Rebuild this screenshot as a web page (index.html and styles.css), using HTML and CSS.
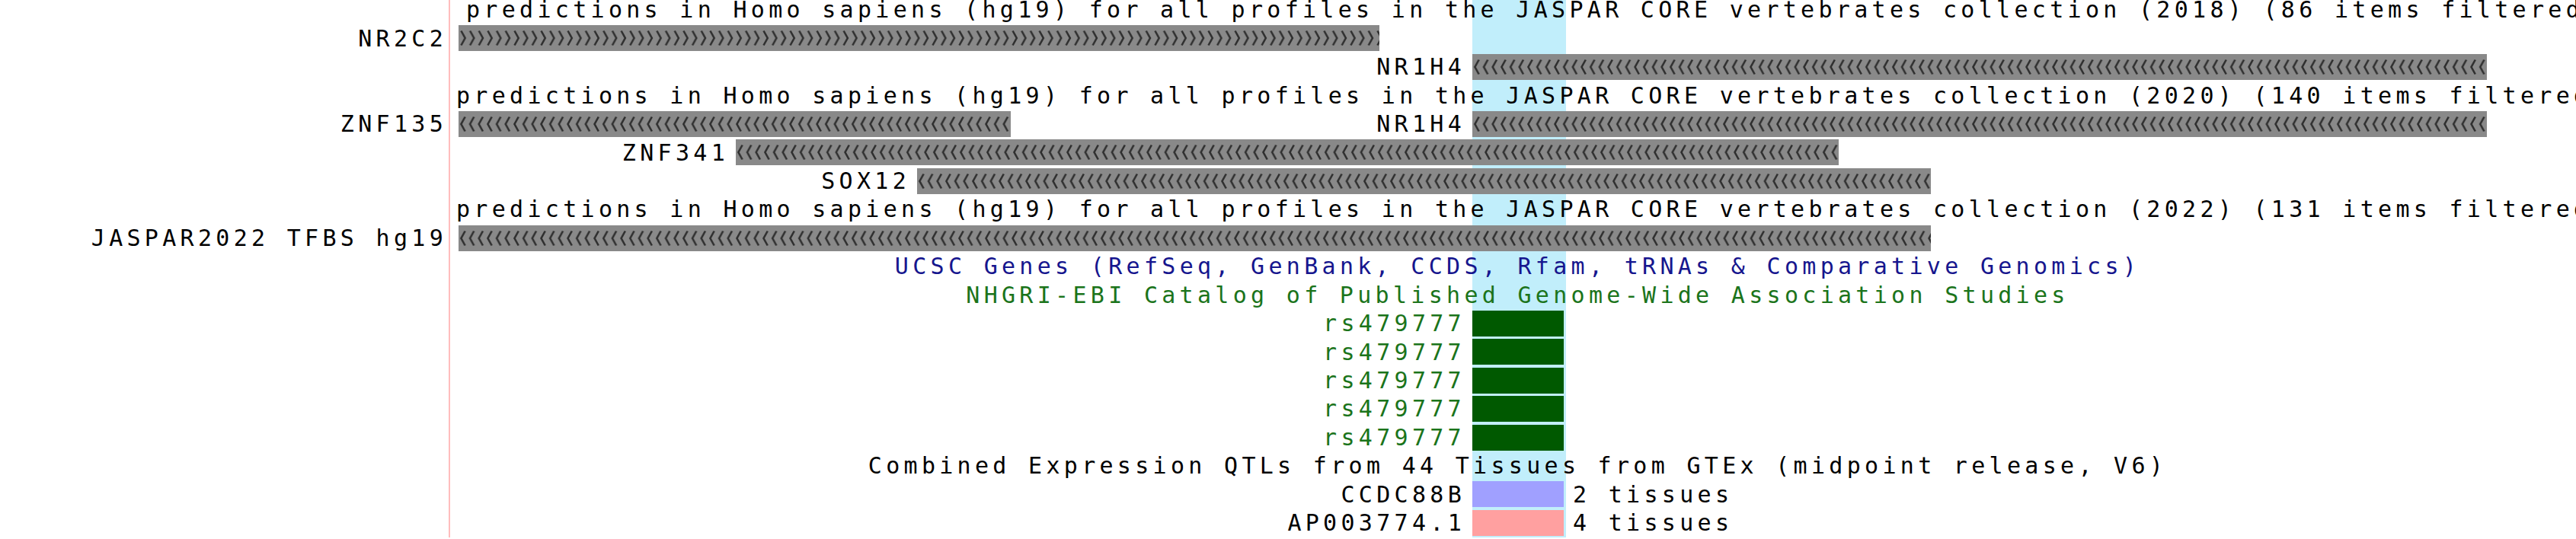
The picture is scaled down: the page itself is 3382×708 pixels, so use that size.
FILE: index.html
```html
<!DOCTYPE html>
<html>
<head>
<meta charset="utf-8">
<title>UCSC tracks</title>
<link rel="stylesheet" href="styles.css">
</head>
<body>
<svg class="defs" width="0" height="0" aria-hidden="true">
  <defs>
    <pattern id="chevR" width="11.68" height="34" patternUnits="userSpaceOnUse">
      <path d="M3.4 7.5 L8.6 17 L3.4 26.5" fill="none" stroke="#2f2f2f" stroke-width="2.6"/>
    </pattern>
    <pattern id="chevL" width="11.68" height="34" patternUnits="userSpaceOnUse">
      <path d="M8.6 7.5 L3.4 17 L8.6 26.5" fill="none" stroke="#2f2f2f" stroke-width="2.6"/>
    </pattern>
  </defs>
</svg>
<div class="browser">
  <div class="highlight"></div>

  <div class="row">
    <div class="side"></div>
    <div class="track"><div class="title title-2018">predictions in Homo sapiens (hg19) for all profiles in the JASPAR CORE vertebrates collection (2018) (86 items filtered)</div></div>
  </div>

  <div class="row">
    <div class="side">NR2C2</div>
    <div class="track">
      <div class="feat" style="left:11px;width:1209px"><svg class="chev"><rect width="100%" height="100%" fill="url(#chevR)"/></svg></div>
    </div>
  </div>

  <div class="row">
    <div class="side"></div>
    <div class="track">
      <div class="feat" style="left:1342px;width:1332px"><span class="lbl">NR1H4</span><svg class="chev"><rect width="100%" height="100%" fill="url(#chevL)"/></svg></div>
    </div>
  </div>

  <div class="row">
    <div class="side"></div>
    <div class="track"><div class="title">predictions in Homo sapiens (hg19) for all profiles in the JASPAR CORE vertebrates collection (2020) (140 items filtered)</div></div>
  </div>

  <div class="row">
    <div class="side">ZNF135</div>
    <div class="track">
      <div class="feat" style="left:11px;width:725px"><svg class="chev"><rect width="100%" height="100%" fill="url(#chevL)"/></svg></div>
      <div class="feat" style="left:1342px;width:1332px"><span class="lbl">NR1H4</span><svg class="chev"><rect width="100%" height="100%" fill="url(#chevL)"/></svg></div>
    </div>
  </div>

  <div class="row">
    <div class="side"></div>
    <div class="track">
      <div class="feat" style="left:375px;width:1448px"><span class="lbl">ZNF341</span><svg class="chev"><rect width="100%" height="100%" fill="url(#chevL)"/></svg></div>
    </div>
  </div>

  <div class="row">
    <div class="side"></div>
    <div class="track">
      <div class="feat" style="left:613px;width:1331px"><span class="lbl">SOX12</span><svg class="chev"><rect width="100%" height="100%" fill="url(#chevL)"/></svg></div>
    </div>
  </div>

  <div class="row">
    <div class="side"></div>
    <div class="track"><div class="title">predictions in Homo sapiens (hg19) for all profiles in the JASPAR CORE vertebrates collection (2022) (131 items filtered)</div></div>
  </div>

  <div class="row">
    <div class="side">JASPAR2022 TFBS hg19</div>
    <div class="track">
      <div class="feat" style="left:11px;width:1933px"><svg class="chev"><rect width="100%" height="100%" fill="url(#chevL)"/></svg></div>
    </div>
  </div>

  <div class="row">
    <div class="side"></div>
    <div class="track"><div class="center blue">UCSC Genes (RefSeq, GenBank, CCDS, Rfam, tRNAs &amp; Comparative Genomics)</div></div>
  </div>

  <div class="row">
    <div class="side"></div>
    <div class="track"><div class="center green">NHGRI-EBI Catalog of Published Genome-Wide Association Studies</div></div>
  </div>

  <div class="row">
    <div class="side"></div>
    <div class="track"><div class="feat gwas" style="left:1342px;width:120px"><span class="lbl">rs479777</span></div></div>
  </div>
  <div class="row">
    <div class="side"></div>
    <div class="track"><div class="feat gwas" style="left:1342px;width:120px"><span class="lbl">rs479777</span></div></div>
  </div>
  <div class="row">
    <div class="side"></div>
    <div class="track"><div class="feat gwas" style="left:1342px;width:120px"><span class="lbl">rs479777</span></div></div>
  </div>
  <div class="row">
    <div class="side"></div>
    <div class="track"><div class="feat gwas" style="left:1342px;width:120px"><span class="lbl">rs479777</span></div></div>
  </div>
  <div class="row">
    <div class="side"></div>
    <div class="track"><div class="feat gwas" style="left:1342px;width:120px"><span class="lbl">rs479777</span></div></div>
  </div>

  <div class="row">
    <div class="side"></div>
    <div class="track"><div class="center">Combined Expression QTLs from 44 Tissues from GTEx (midpoint release, V6)</div></div>
  </div>

  <div class="row">
    <div class="side"></div>
    <div class="track"><div class="feat lav" style="left:1342px;width:120px"><span class="lbl">CCDC88B</span><span class="after">2 tissues</span></div></div>
  </div>
  <div class="row">
    <div class="side"></div>
    <div class="track"><div class="feat pink" style="left:1342px;width:120px"><span class="lbl">AP003774.1</span><span class="after">4 tissues</span></div></div>
  </div>
</div>
</body>
</html>
```

FILE: styles.css
```css
html, body {
  margin: 0;
  padding: 0;
  background: #ffffff;
  overflow: hidden;
}

body {
  width: 3382px;
  height: 708px;
  font-family: "DejaVu Sans Mono", "Liberation Mono", monospace;
  font-size: 30px;
  letter-spacing: 5.3px;
  color: #000000;
}

.defs {
  position: absolute;
  width: 0;
  height: 0;
  overflow: hidden;
}

.browser {
  position: relative;
  margin-top: -5.7px;
}

.highlight {
  position: absolute;
  top: 0;
  bottom: 0;
  left: 1933px;
  width: 123px;
  background: #c1eefb;
}

.row {
  position: relative;
  display: grid;
  grid-template-columns: 591px 1fr;
  height: 37.44px;
  line-height: 37.44px;
}

.side {
  border-right: 2px solid #ffbdbd;
  padding-right: 2px;
  text-align: right;
  white-space: nowrap;
  background: #ffffff;
}

.track {
  position: relative;
  overflow: hidden;
  white-space: nowrap;
}

.title {
  padding-left: 8px;
}

.title-2018 {
  padding-left: 21px;
}

.center {
  text-align: center;
  padding-left: 12px;
}

.blue {
  color: #16168e;
}

.green {
  color: #1b741b;
}

.feat {
  position: absolute;
  top: 1.7px;
  height: 34px;
  background: #898989;
}

.chev {
  display: block;
  width: 100%;
  height: 100%;
}

.lbl {
  position: absolute;
  right: calc(100% + 9px);
  top: -1.7px;
  line-height: 37.44px;
  white-space: nowrap;
}

.after {
  position: absolute;
  left: calc(100% + 12px);
  top: -1.7px;
  line-height: 37.44px;
  white-space: nowrap;
}

.gwas {
  background: #005900;
}

.gwas .lbl {
  color: #1b741b;
}

.lav {
  background: #a0a0ff;
}

.pink {
  background: #ffa0a0;
}
```
